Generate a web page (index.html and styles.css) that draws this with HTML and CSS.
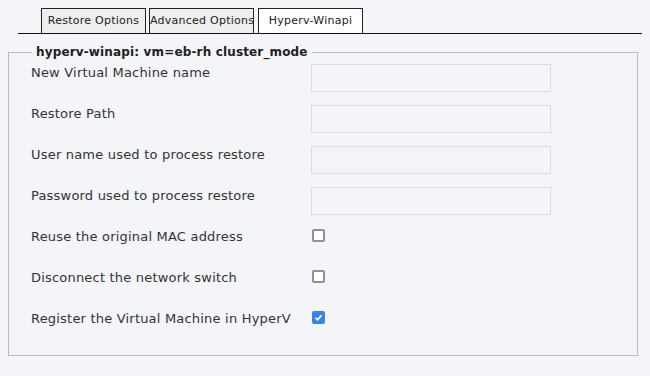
FILE: index.html
```html
<!DOCTYPE html>
<html lang="en">
<head>
  <meta charset="UTF-8">
  <meta name="viewport" content="width=device-width, initial-scale=1.0">
  <title>Restore - Hyperv-Winapi</title>
  <link rel="stylesheet" href="styles.css">
</head>
<body>

  <!-- Abas -->
  <ul class="tabs">
    <li class="tab">Restore Options</li>
    <li class="tab">Advanced Options</li>
    <li class="tab active">Hyperv-Winapi</li>
  </ul>

  <!-- Opcoes do plugin -->
  <fieldset class="plugin">
    <legend>hyperv-winapi: vm=eb-rh cluster_mode</legend>
    <div class="form-grid">
      <label class="field-label" for="vmName">New Virtual Machine name</label>
      <input class="text-input" type="text" id="vmName">

      <label class="field-label" for="restorePath">Restore Path</label>
      <input class="text-input" type="text" id="restorePath">

      <label class="field-label" for="userName">User name used to process restore</label>
      <input class="text-input" type="text" id="userName">

      <label class="field-label" for="password">Password used to process restore</label>
      <input class="text-input" type="password" id="password">

      <label class="field-label" for="reuseMac">Reuse the original MAC address</label>
      <div><input class="check" type="checkbox" id="reuseMac"></div>

      <label class="field-label" for="disconnect">Disconnect the network switch</label>
      <div><input class="check" type="checkbox" id="disconnect"></div>

      <label class="field-label" for="register">Register the Virtual Machine in HyperV</label>
      <div><input class="check" type="checkbox" id="register" checked></div>
    </div>
  </fieldset>

</body>
</html>
```

FILE: styles.css
```css
body {
  font-family: "DejaVu Sans", sans-serif;
  background-color: #f4f5f9;
  color: #333;
  margin: 8px;
}

.tabs {
  list-style: none;
  margin: 0 -8px 11px 10px;
  padding: 0 0 0 23px;
  border-bottom: 1px solid #111;
  display: flex;
  gap: 3px;
}

.tab {
  width: 103px;
  height: 24px;
  line-height: 24px;
  font-size: 11px;
  letter-spacing: 0.25px;
  text-align: center;
  color: #222;
  background-color: #eeeeee;
  border: 1px solid #222;
  border-bottom: none;
  white-space: nowrap;
}

.tab.active {
  background-color: #fff;
  margin-left: 1px;
}

.plugin {
  margin: 0 4px 0 0;
  padding: 5px 22px 17px 22px;
  border: 1px solid #b9b9cc;
}

.plugin legend {
  font-weight: bold;
  font-size: 12px;
  letter-spacing: 0.15px;
  color: #222;
  padding: 0 4px;
  margin-left: 1px;
}

.form-grid {
  display: grid;
  grid-template-columns: 280px 240px;
  grid-auto-rows: 28px;
  row-gap: 13px;
  align-items: start;
}

.field-label {
  font-size: 13px;
  line-height: 17px;
  letter-spacing: 0.2px;
  color: #333;
}

.text-input {
  box-sizing: border-box;
  width: 240px;
  height: 28px;
  margin: 0;
  border: 1px solid #dcdcdf;
  background-color: #f4f5f9;
}

.check {
  appearance: none;
  box-sizing: border-box;
  width: 13px;
  height: 13px;
  margin: 1px 0 0 1px;
  border: 2px solid #8f8f9d;
  border-radius: 2px;
  background-color: #fff;
  display: block;
}

.check:checked {
  border-color: #3a84e2;
  background-color: #3a84e2;
  background-image: url("data:image/svg+xml,%3Csvg xmlns='http://www.w3.org/2000/svg' viewBox='0 0 9 9'%3E%3Cpath d='M1.5 4.8 L3.6 6.8 L7.5 2.2' fill='none' stroke='white' stroke-width='1.6'/%3E%3C/svg%3E");
  background-size: 100% 100%;
}
```
